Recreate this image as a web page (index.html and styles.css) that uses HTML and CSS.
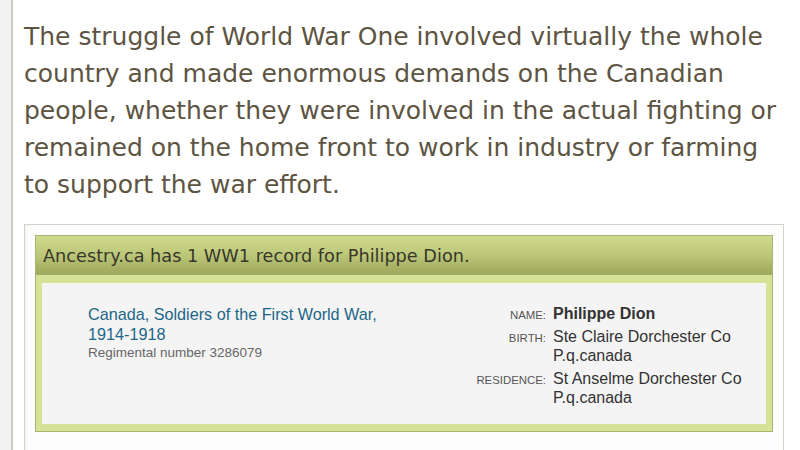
FILE: index.html
```html
<!DOCTYPE html>
<html lang="en">
<head>
    <meta charset="UTF-8">
    <meta name="viewport" content="width=device-width, initial-scale=1.0">
    <title>Philippe Dion - WW1</title>
    <link rel="stylesheet" href="styles.css">
</head>
<body>
    <div class="page">
        <p class="intro">The struggle of World War One involved virtually the whole country and made enormous demands on the Canadian people, whether they were involved in the actual fighting or remained on the home front to work in industry or farming to support the war effort.</p>

        <div class="card">
            <div class="records">
                <h2 class="records_title">Ancestry.ca has 1 WW1 record for Philippe Dion.</h2>
                <div class="records_body">
                    <div class="record">
                        <div class="record_source">
                            <a href="" class="record_link">Canada, Soldiers of the First World War, 1914-1918</a>
                            <div class="record_note">Regimental number 3286079</div>
                        </div>
                        <dl class="record_facts">
                            <dt>Name:</dt>
                            <dd class="fact_name">Philippe Dion</dd>
                            <dt>Birth:</dt>
                            <dd>Ste Claire Dorchester Co P.q.canada</dd>
                            <dt>Residence:</dt>
                            <dd>St Anselme Dorchester Co P.q.canada</dd>
                        </dl>
                    </div>
                </div>
            </div>
        </div>
    </div>
</body>
</html>
```

FILE: styles.css
```css
* {
    margin: 0;
    padding: 0;
}

body {
    background-color: #f2f2f2;
    height: 450px;
    overflow: hidden;
}

.page {
    margin-left: 11px;
    border-left: 2px solid #cfcac3;
    background-color: #fff;
    min-height: 450px;
    padding: 18px 0 0 11px;
}

.intro {
    width: 760px;
    font-family: "DejaVu Sans", Verdana, sans-serif;
    font-size: 25px;
    line-height: 37px;
    color: #5d5442;
}

.card {
    width: 738px;
    margin-top: 21px;
    border: 1px solid #d5d1c9;
    padding: 10px 10px 40px 10px;
    background-color: #fdfdfd;
    box-shadow: inset 3px 0 4px -2px rgba(0, 0, 0, 0.06);
}

.records {
    border: 1px solid #aab371;
    background-color: #d6e296;
}

.records_title {
    height: 38px;
    padding-left: 7px;
    font-family: "DejaVu Sans", Verdana, sans-serif;
    font-size: 17.7px;
    font-weight: normal;
    line-height: 40px;
    color: #38372a;
    background: linear-gradient(to bottom, #cfda8d 0%, #bcc779 50%, #9ea75b 100%);
    border-bottom: 1px solid #a5ae68;
}

.records_body {
    padding: 8px 6px 7px 6px;
}

.record {
    display: flex;
    justify-content: space-between;
    background-color: #f4f4f4;
    padding: 21px 13px 17px 46px;
    min-height: 101px;
    font-family: "Liberation Sans", Arial, sans-serif;
}

.record_source {
    width: 300px;
}

.record_link {
    font-size: 16.2px;
    line-height: 20px;
    color: #1c6688;
    text-decoration: none;
}

.record_note {
    font-size: 13.5px;
    line-height: 18px;
    color: #666;
}

.record_facts {
    display: grid;
    grid-template-columns: auto 200px;
    column-gap: 7px;
    row-gap: 4px;
    align-items: baseline;
}

.record_facts dt {
    text-align: right;
    text-transform: uppercase;
    font-size: 11.4px;
    color: #555;
}

.record_facts dd {
    font-size: 16px;
    line-height: 19px;
    color: #333;
}

.record_facts dd.fact_name {
    font-weight: bold;
}
```
